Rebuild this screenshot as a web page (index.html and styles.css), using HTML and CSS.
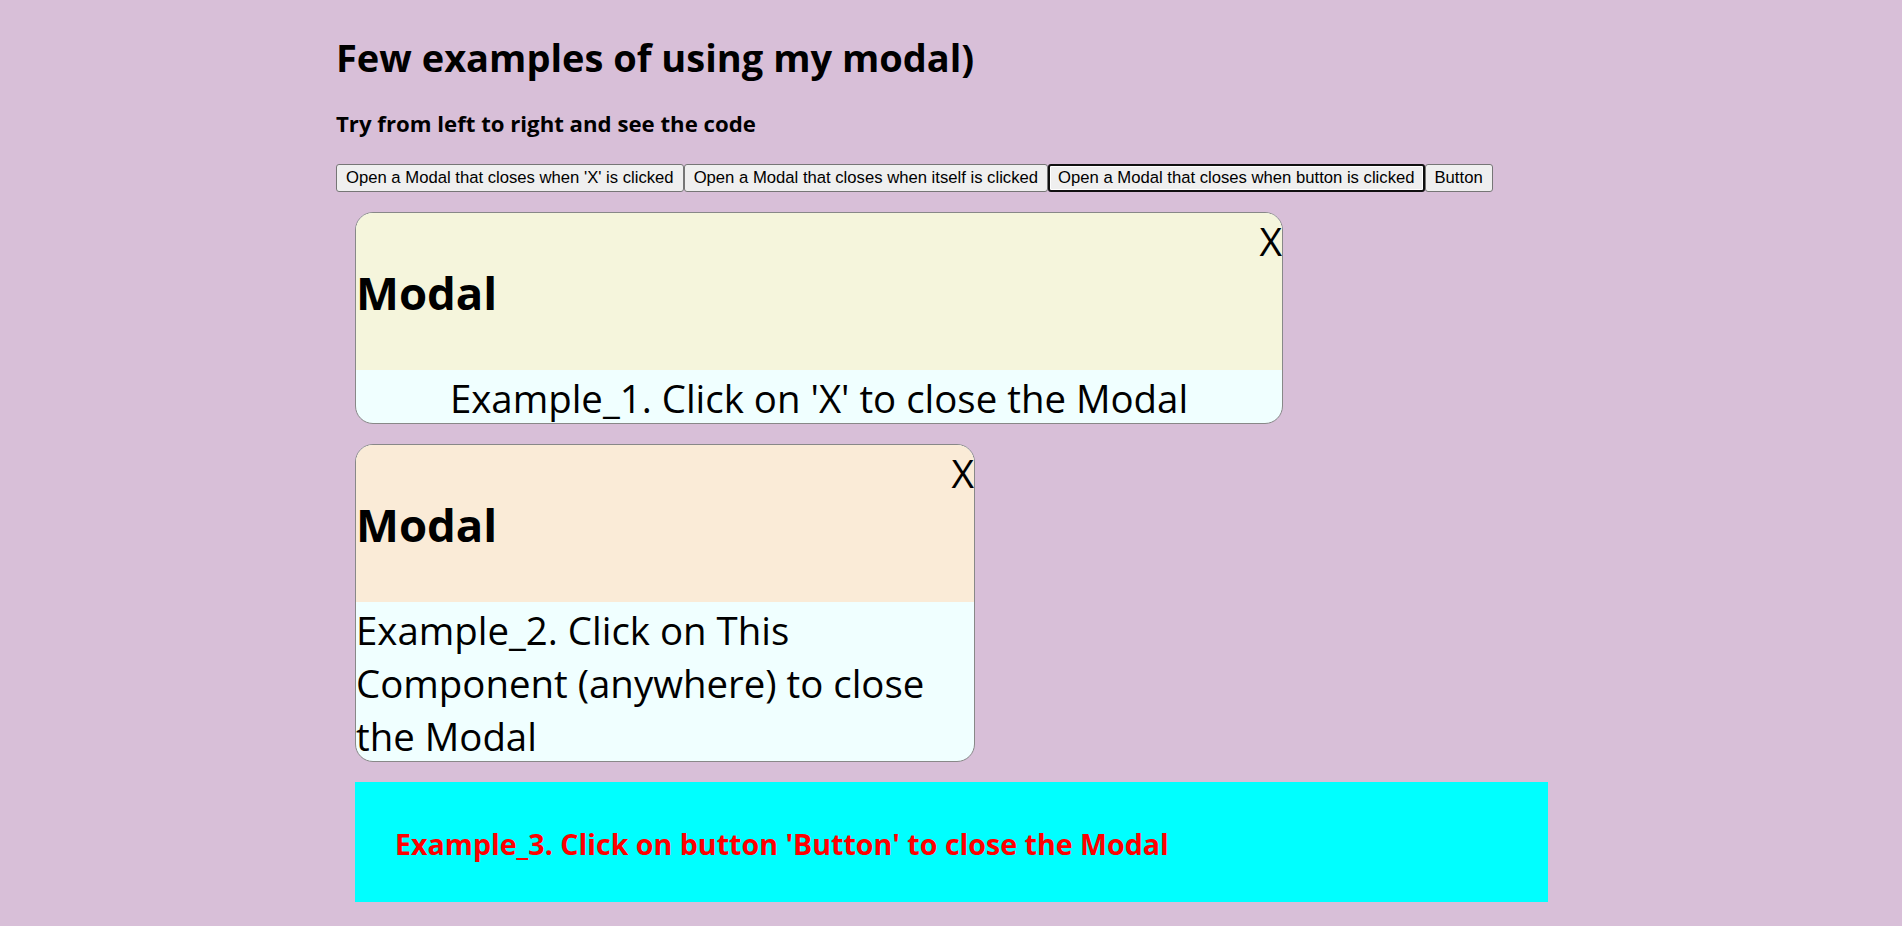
FILE: index.html
```html
<!DOCTYPE html>
<html lang="en">
<head>
<meta charset="utf-8">
<title>Modal examples</title>
<link rel="stylesheet" href="styles.css">
</head>
<body>
<div class="page">
  <h1 class="title">Few examples of using my modal)</h1>
  <h3 class="subtitle">Try from left to right and see the code</h3>
  <div class="controls"><button class="btn">Open a Modal that closes when 'X' is clicked</button><button class="btn">Open a Modal that closes when itself is clicked</button><button class="btn btn-focus">Open a Modal that closes when button is clicked</button><button class="btn">Button</button></div>
  <div class="modals">
    <div class="modal modal-wide">
      <div class="modal-header header-beige">
        <span class="close">X</span>
        <h1 class="modal-title">Modal</h1>
      </div>
      <div class="modal-body body-center">Example_1. Click on 'X' to close the Modal</div>
    </div>
    <div class="modal modal-narrow">
      <div class="modal-header header-antique">
        <span class="close">X</span>
        <h1 class="modal-title">Modal</h1>
      </div>
      <div class="modal-body">Example_2. Click on This Component (anywhere) to close the Modal</div>
    </div>
    <div class="banner">
      <h2 class="banner-text">Example_3. Click on button 'Button' to close the Modal</h2>
    </div>
  </div>
</div>
</body>
</html>
```
FILE: styles.css
```css
html, body {
  margin: 0;
  padding: 0;
}
body {
  background: #d8bfd8;
  font-family: "Open Sans", "Noto Sans", sans-serif;
  color: #000;
}
.page {
  width: 1230px;
  margin: 0 auto;
  padding-top: 31px;
  display: flex;
  flex-direction: column;
}
.title {
  margin: 0;
  font-size: 38px;
  line-height: 53px;
  font-weight: 700;
}
.subtitle {
  margin: 24px 0 0;
  font-size: 22.2px;
  line-height: 31px;
  font-weight: 700;
}
.controls {
  margin-top: 25px;
  display: flex;
}
.btn {
  font-family: "Liberation Sans", Arial, sans-serif;
  font-size: 16.67px;
  line-height: 20px;
  height: 28px;
  padding: 0 9px;
  background: #efefef;
  color: #000;
  border: 1px solid #767676;
  border-radius: 3px;
  margin: 0;
  white-space: nowrap;
}
.btn-focus {
  border: 2px solid #101010;
  padding: 0 8px;
  box-shadow: inset 0 0 0 1px #fff;
}
.modals {
  margin: 20px 18px 0 19px;
  display: flex;
  flex-direction: column;
  align-items: flex-start;
  gap: 20px;
}
.modal {
  border: 1px solid #888;
  border-radius: 18px;
  overflow: hidden;
  background: #f0ffff;
  box-sizing: border-box;
}
.modal-wide { width: 928px; }
.modal-narrow { width: 620px; }
.modal-header {
  display: flex;
  flex-direction: column;
  height: 157px;
  box-sizing: border-box;
}
.header-beige { background: #f5f5dc; }
.header-antique { background: #faebd7; }
.close {
  align-self: flex-end;
  font-size: 39px;
  line-height: 55px;
}
.modal-title {
  margin: -2px 0 0;
  font-size: 45.5px;
  line-height: 52px;
  font-weight: 700;
}
.modal-body {
  font-size: 38.4px;
  line-height: 53px;
  padding-top: 2px;
  margin-bottom: -2px;
}
.body-center { text-align: center; }
.banner {
  align-self: stretch;
  background: #00ffff;
  height: 120px;
  box-sizing: border-box;
  display: flex;
  align-items: center;
  padding: 3px 0 0 40px;
}
.banner-text {
  margin: 0;
  color: #ff0000;
  font-size: 28.6px;
  line-height: 40px;
  font-weight: 700;
}
```
